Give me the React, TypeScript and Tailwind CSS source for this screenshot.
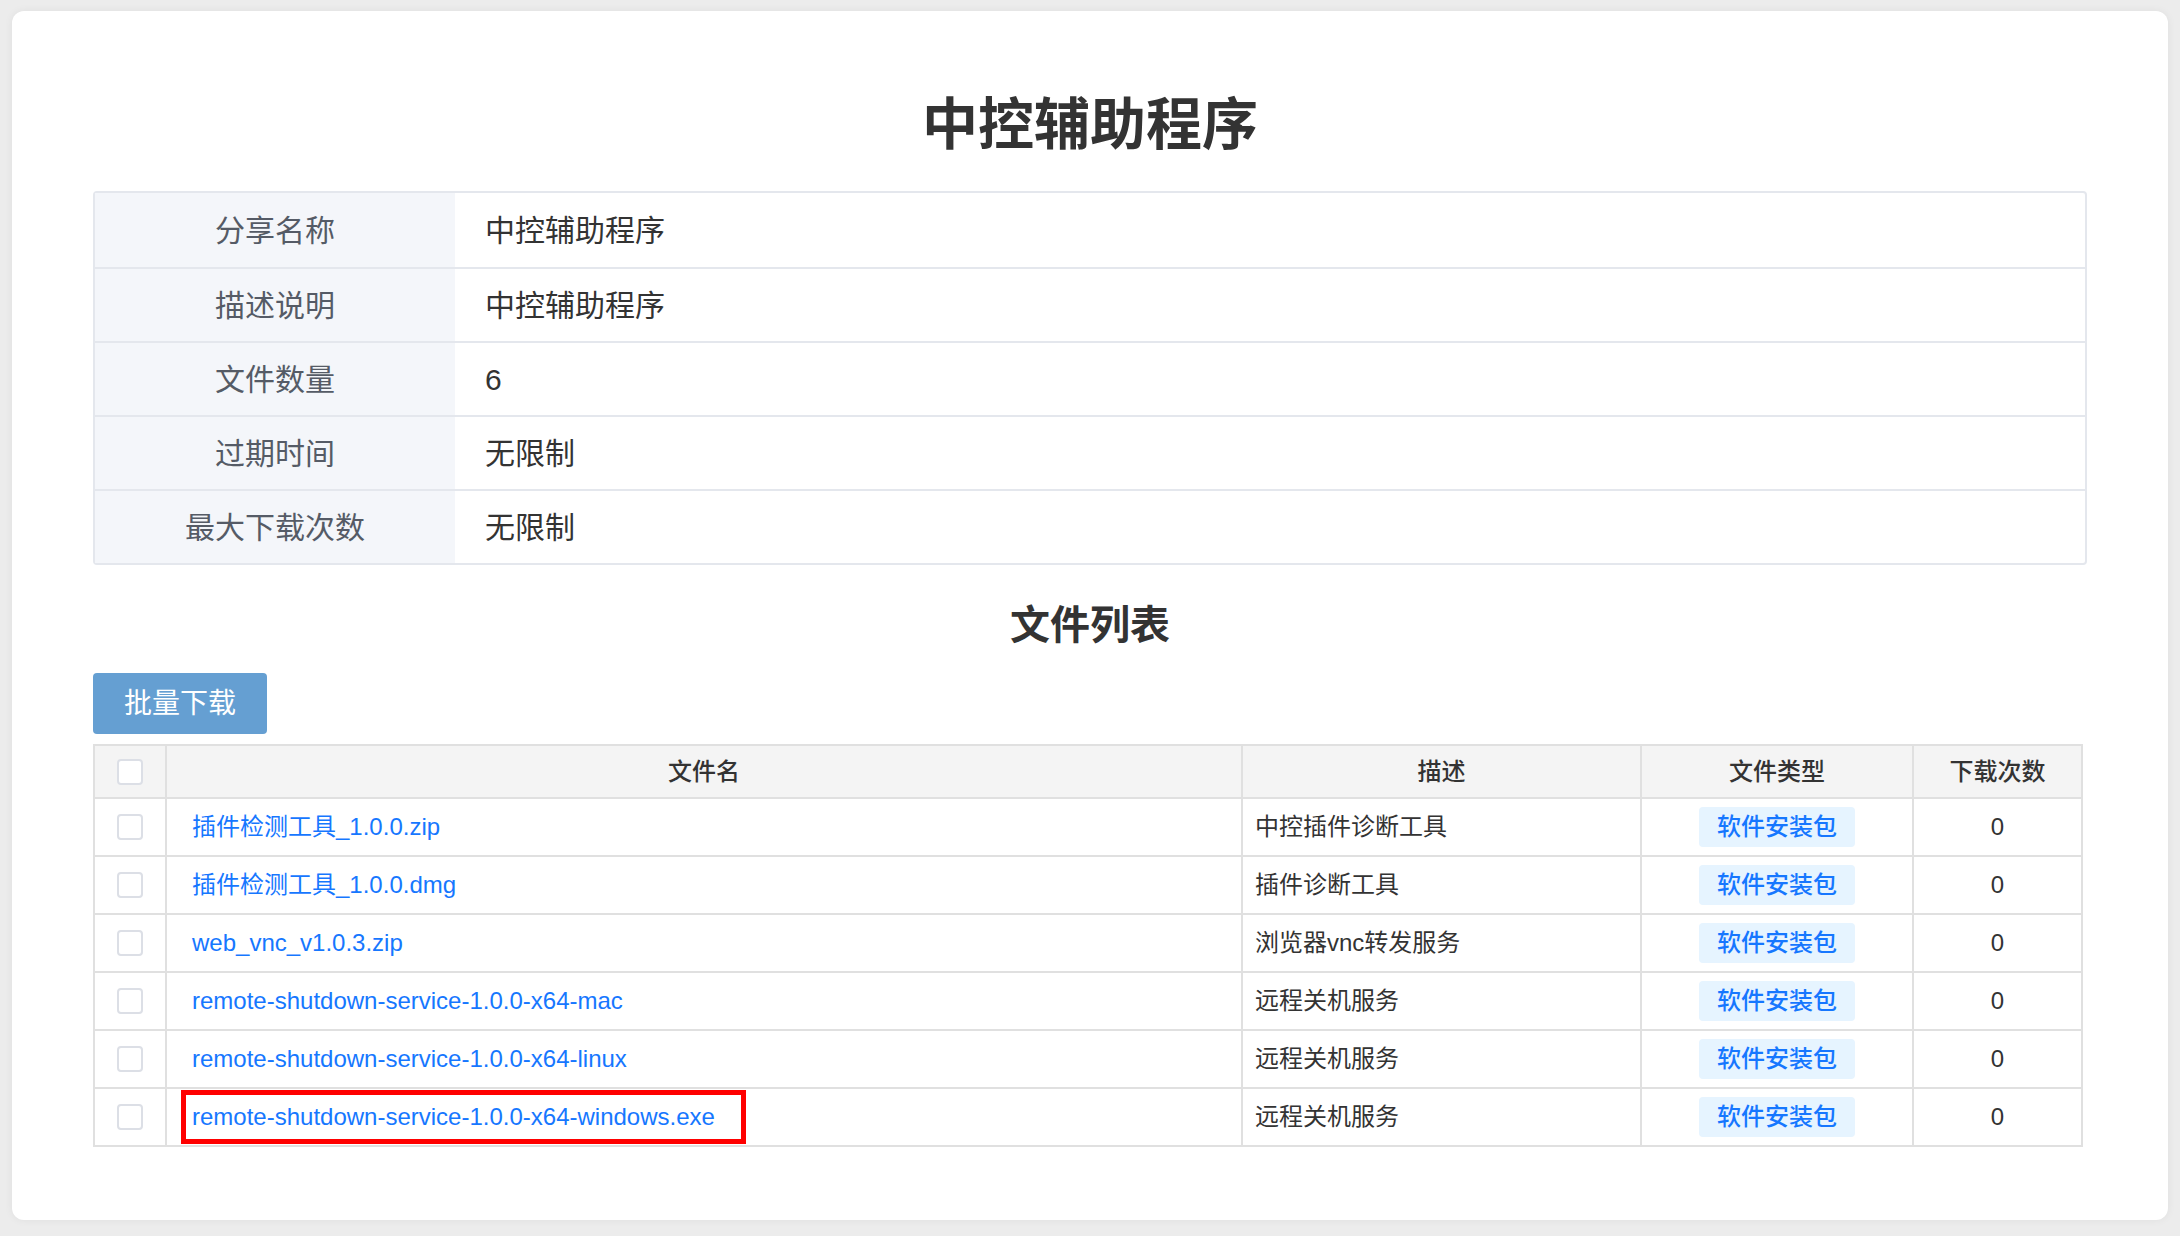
import React from 'react';

type FileRow = {
  name: string;
  desc: string;
  highlight?: boolean;
};

const files: FileRow[] = [
  { name: '插件检测工具_1.0.0.zip', desc: '中控插件诊断工具' },
  { name: '插件检测工具_1.0.0.dmg', desc: '插件诊断工具' },
  { name: 'web_vnc_v1.0.3.zip', desc: '浏览器vnc转发服务' },
  { name: 'remote-shutdown-service-1.0.0-x64-mac', desc: '远程关机服务' },
  { name: 'remote-shutdown-service-1.0.0-x64-linux', desc: '远程关机服务' },
  { name: 'remote-shutdown-service-1.0.0-x64-windows.exe', desc: '远程关机服务', highlight: true },
];

const info = [
  ['分享名称', '中控辅助程序'],
  ['描述说明', '中控辅助程序'],
  ['文件数量', '6'],
  ['过期时间', '无限制'],
  ['最大下载次数', '无限制'],
];

function Checkbox() {
  return <span className="inline-block w-[26px] h-[26px] rounded-[4px] border-2 border-[#dcdfe6] bg-white" />;
}

function App() {
  return (
    <div
      className="w-[2180px] h-[1236px] bg-[#ececec] px-[12px] pt-[11px]"
      style={{ fontFamily: '"Liberation Sans", "Noto Sans CJK SC", sans-serif' }}
    >
      <div className="h-[1209px] bg-white rounded-[12px] shadow-[0_0_8px_rgba(0,0,0,0.06)] px-[81px] pt-[78px]">
        <h1 className="text-center text-[56px] leading-[72px] font-bold text-[#333]">中控辅助程序</h1>

        <div className="mt-[30px] border-2 border-[#e4e7ed] rounded-[4px]">
          {info.map(([k, v], i) => (
            <div key={k} className={`flex h-[74px] ${i > 0 ? 'border-t-2 border-[#e4e7ed]' : ''}`}>
              <div className="w-[360px] bg-[#f4f6fa] flex items-center justify-center text-[30px] text-[#555b66]">{k}</div>
              <div className="flex-1 flex items-center pl-[30px] text-[30px] text-[#333]">{v}</div>
            </div>
          ))}
        </div>

        <h2 className="mt-[34px] text-center text-[40px] leading-[52px] font-bold text-[#333]">文件列表</h2>

        <button className="mt-[22px] w-[174px] h-[61px] rounded-[4px] bg-[#659fd2] text-white text-[28px]">批量下载</button>

        <table className="mt-[10px] w-[1990px] border-collapse border-2 border-[#e0e0e0] text-[24px] text-[#333]">
          <thead>
            <tr className="h-[53px] bg-[#f4f4f4]">
              <th className="w-[72px] border-2 border-[#e0e0e0]">
                <div className="flex justify-center"><Checkbox /></div>
              </th>
              <th className="w-[1076px] border-2 border-[#e0e0e0] font-medium">文件名</th>
              <th className="w-[399px] border-2 border-[#e0e0e0] font-medium">描述</th>
              <th className="w-[272px] border-2 border-[#e0e0e0] font-medium">文件类型</th>
              <th className="border-2 border-[#e0e0e0] font-medium">下载次数</th>
            </tr>
          </thead>
          <tbody>
            {files.map((f) => (
              <tr key={f.name} className="h-[58px]">
                <td className="border-2 border-[#e0e0e0]">
                  <div className="flex justify-center"><Checkbox /></div>
                </td>
                <td className="border-2 border-[#e0e0e0] pl-[25px]">
                  {f.highlight ? (
                    <span className="inline-block border-[5px] border-[#ff0000] pl-[6px] pr-[26px] py-[4px] -ml-[11px] text-[#1677ff]">
                      {f.name}
                    </span>
                  ) : (
                    <span className="text-[#1677ff]">{f.name}</span>
                  )}
                </td>
                <td className="border-2 border-[#e0e0e0] pl-[12px]">{f.desc}</td>
                <td className="border-2 border-[#e0e0e0] text-center">
                  <span className="inline-block px-[18px] py-[2px] rounded-[4px] bg-[#e6f4ff] text-[#1677ff] font-medium">软件安装包</span>
                </td>
                <td className="border-2 border-[#e0e0e0] text-center">0</td>
              </tr>
            ))}
          </tbody>
        </table>
      </div>
    </div>
  );
}

export default App;
